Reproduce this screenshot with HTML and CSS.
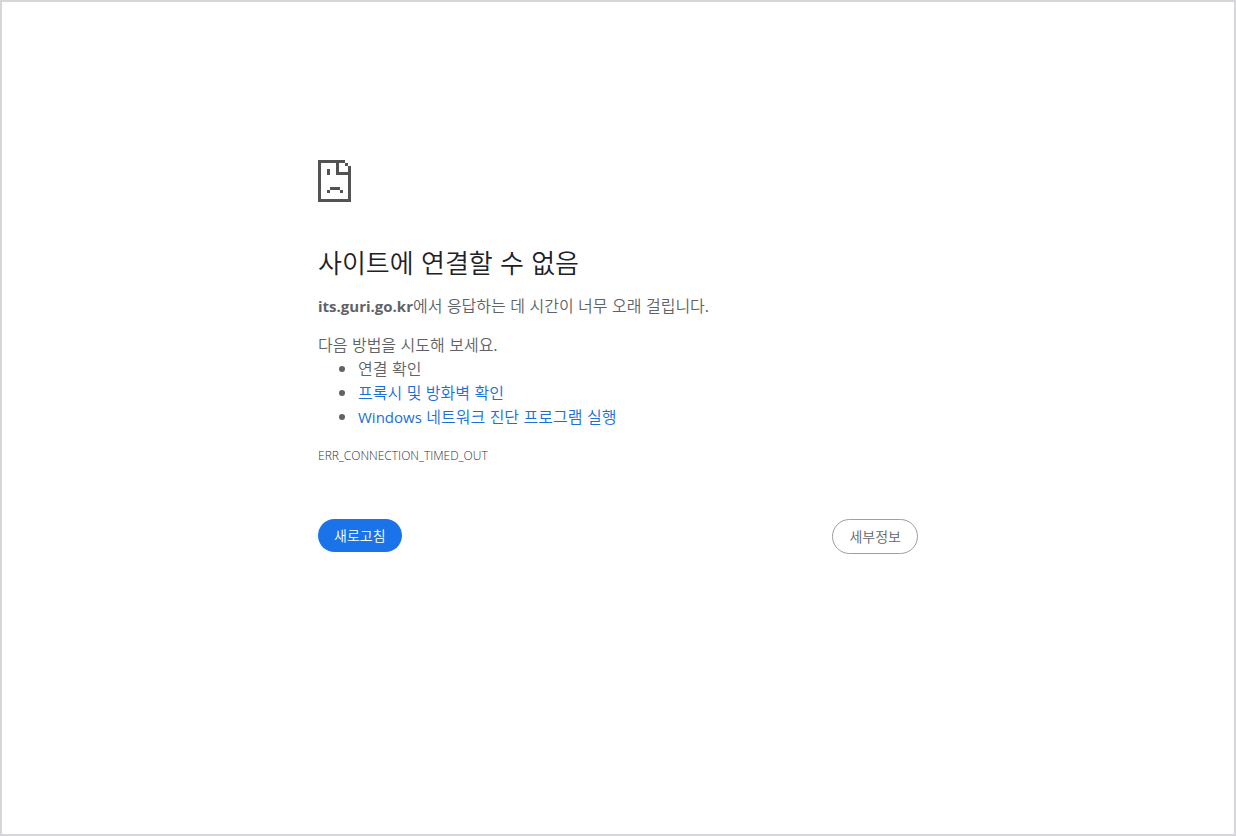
FILE: index.html
```html
<!DOCTYPE html>
<html lang="ko">
<head>
    <meta charset="UTF-8">
    <meta name="viewport" content="width=device-width, initial-scale=1.0">
    <title>its.guri.go.kr</title>
    <link rel="stylesheet" href="styles.css">
</head>
<body>
    <main class="error-page">
        <!-- Sad page icon -->
        <svg class="icon" viewBox="0 0 33 42" shape-rendering="crispEdges" aria-hidden="true">
            <path d="M0 0H27V3H21V12H30V6H33V42H0ZM3 3V39H30V15H18V3Z" fill-rule="evenodd" />
            <path d="M27 3h3v3h-3zM9 9h3v6H9zM12 27h10v3H12zM9 30h3v3H9zM22 30h3v3h-3z" />
        </svg>

        <h1>사이트에 연결할 수 없음</h1>
        <p><strong>its.guri.go.kr</strong>에서 응답하는 데 시간이 너무 오래 걸립니다.</p>

        <div class="suggestions">
            <p>다음 방법을 시도해 보세요.</p>
            <ul>
                <li>연결 확인</li>
                <li><a href="#proxy">프록시 및 방화벽 확인</a></li>
                <li><a href="#diagnose"><span class="latin">Windows</span> 네트워크 진단 프로그램 실행</a></li>
            </ul>
        </div>

        <div class="error-code">ERR_CONNECTION_TIMED_OUT</div>

        <div class="buttons">
            <button type="button" class="reload">새로고침</button>
            <button type="button" class="details">세부정보</button>
        </div>
    </main>
</body>
</html>
```
FILE: styles.css
```css
* {
    box-sizing: border-box;
}

body {
    margin: 0;
    min-height: 100vh;
    padding: 0 24px;
    border: 2px solid #d5d5da;
    background-color: #fff;
    color: #5f6368;
    font-family: "Noto Sans CJK KR", sans-serif;
    font-size: 16px;
    font-weight: 350;
    line-height: 24px;
}

.error-page {
    max-width: 600px;
    margin: 0 auto;
    padding: 158px 0 32px;
}

.icon {
    display: block;
    width: 33px;
    height: 42px;
    fill: #535353;
}

h1 {
    margin: 44px 0 15px;
    color: #202124;
    font-size: 26px;
    font-weight: 350;
    line-height: 32px;
}

p {
    margin: 0;
}

strong,
.latin {
    font-family: "Open Sans", sans-serif;
    font-size: 15px;
    line-height: 16px;
}

strong {
    font-weight: 700;
}

.latin {
    font-weight: 400;
}

.suggestions {
    margin-top: 15px;
}

ul {
    margin: 0;
    padding-left: 40px;
}

a {
    color: #1a6fd8;
    text-decoration: none;
}

.error-code {
    margin-top: 16px;
    color: #303236;
    font-family: "Open Sans", sans-serif;
    font-size: 12px;
    font-weight: 300;
}

.buttons {
    display: flex;
    justify-content: space-between;
    align-items: flex-start;
    margin-top: 51px;
}

button {
    padding: 8px 16px;
    border: 0;
    border-radius: 20px;
    font-family: inherit;
    font-size: 14px;
    font-weight: 350;
    line-height: 17px;
    cursor: pointer;
}

.reload {
    background-color: #1a73e8;
    color: #fff;
}

.details {
    border: 1px solid #9aa0a6;
    background-color: #fff;
    color: #5f6368;
}
```
